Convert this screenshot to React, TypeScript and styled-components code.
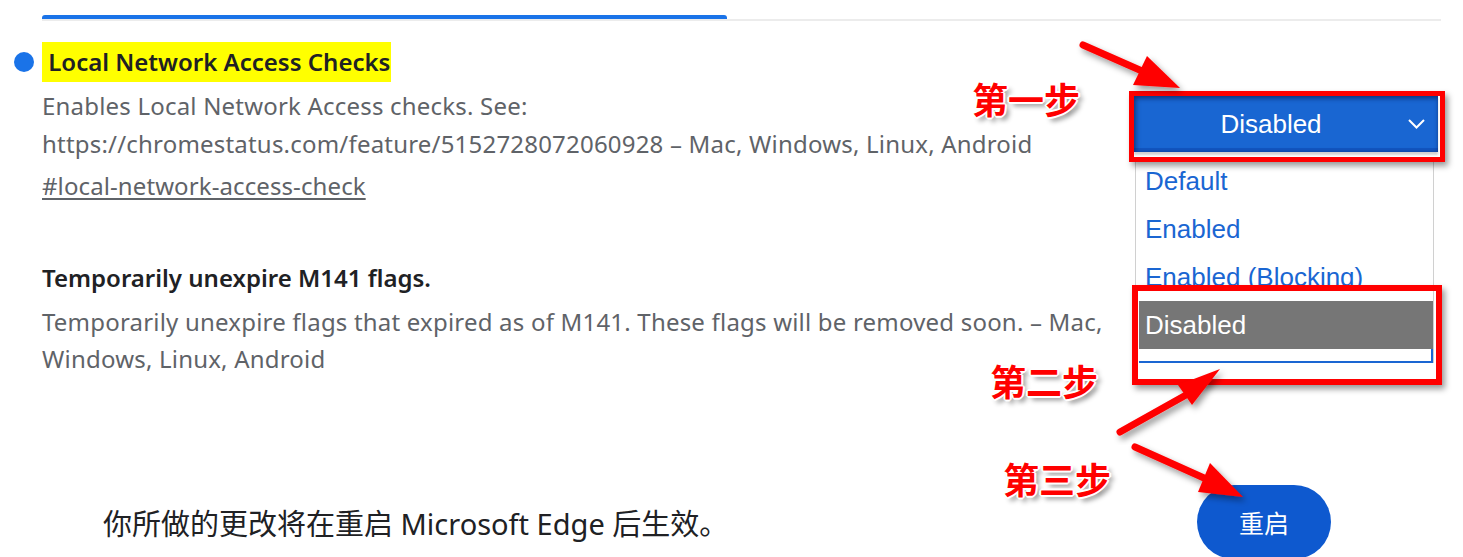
import styled, { createGlobalStyle } from "styled-components";

const GlobalStyle = createGlobalStyle`
  html, body {
    margin: 0;
    padding: 0;
    background: #ffffff;
    overflow: hidden;
  }
  body {
    font-family: "Noto Sans", "Noto Sans CJK SC", sans-serif;
  }
`;

interface IArrow {
    from: [number, number];
    to: [number, number];
    head: [number, number][];
}

const arrows: IArrow[] = [
    { from: [1083, 45], to: [1142, 71], head: [[1180, 88], [1147, 56], [1133, 85]] },
    { from: [1120, 432], to: [1186, 395], head: [[1220, 369], [1178, 385], [1192, 405]] },
    { from: [1135, 447], to: [1204, 478], head: [[1243, 497], [1210, 463], [1198, 492]] },
];

const options = ["Default", "Enabled", "Enabled (Blocking)", "Disabled"];

function App() {
    return (
        <Page>
            <GlobalStyle />
            <TabStrip>
                <ActiveTab />
            </TabStrip>

            <Experiment first>
                <Dot />
                <Info>
                    <Title highlighted> Local Network Access Checks</Title>
                    <Desc>
                        Enables Local Network Access checks. See:
                        https://chromestatus.com/feature/5152728072060928 – Mac, Windows, Linux, Android
                    </Desc>
                    <Permalink>#local-network-access-check</Permalink>
                </Info>
                <Control>
                    <Select>
                        <span>Disabled</span>
                        <svg width="17" height="10" viewBox="0 0 17 10">
                            <polyline points="1,1 8.5,8.5 16,1" fill="none" stroke="#ffffff" strokeWidth="2" />
                        </svg>
                    </Select>
                    <OptionList>
                        {options.map(opt => (
                            <Option key={opt} selected={opt === "Disabled"}>{opt}</Option>
                        ))}
                        <ListEnd />
                    </OptionList>
                </Control>
            </Experiment>

            <Experiment>
                <span />
                <Info>
                    <Title>Temporarily unexpire M141 flags.</Title>
                    <Desc tight>
                        Temporarily unexpire flags that expired as of M141. These flags will be removed soon. – Mac, Windows, Linux, Android
                    </Desc>
                </Info>
            </Experiment>

            <Footer>
                <Message>你所做的更改将在重启 Microsoft Edge 后生效。</Message>
                <RestartButton>重启</RestartButton>
            </Footer>

            {/* annotations pasted over the screenshot */}
            <Frame style={{ left: 1129, top: 91, width: 316, height: 71 }} thick={5} />
            <Frame style={{ left: 1132, top: 285, width: 310, height: 100 }} thick={6} />
            <StepLabel style={{ left: 972, top: 80 }}>第一步</StepLabel>
            <StepLabel style={{ left: 990, top: 362 }}>第二步</StepLabel>
            <StepLabel style={{ left: 1003, top: 460 }}>第三步</StepLabel>
            <ArrowLayer width="1463" height="557" viewBox="0 0 1463 557">
                <defs>
                    <filter id="arrowShadow" x="-20%" y="-20%" width="140%" height="140%">
                        <feDropShadow dx="3" dy="4" stdDeviation="3" floodColor="#000" floodOpacity="0.4" />
                    </filter>
                </defs>
                {arrows.map((a, i) => (
                    <g key={i} filter="url(#arrowShadow)">
                        <line x1={a.from[0]} y1={a.from[1]} x2={a.to[0]} y2={a.to[1]}
                            stroke="#ff0000" strokeWidth="7" strokeLinecap="round" />
                        <polygon points={a.head.map(p => p.join(",")).join(" ")} fill="#ff0000" />
                    </g>
                ))}
            </ArrowLayer>
        </Page>
    );
}

const Page = styled.div`
    position: relative;
    width: 1463px;
    padding-top: 15px;
`;

const TabStrip = styled.div`
    display: flex;
    align-items: flex-end;
    margin: 0 22px 0 42px;
    border-bottom: 2px solid #ececec;
`;

const ActiveTab = styled.div`
    width: 685px;
    height: 4px;
    background: #1a73e8;
    border-radius: 3px 3px 0 0;
`;

const Experiment = styled.section<{ first?: boolean }>`
    display: grid;
    grid-template-columns: 42px 1fr 304px;
    padding-right: 25px;
    align-items: start;
    margin-top: ${props => props.first ? "21px" : "54px"};
`;

const Dot = styled.span`
    width: 20px;
    height: 20px;
    margin: 10px 0 0 14px;
    border-radius: 50%;
    background: #1a73e8;
`;

const Info = styled.div`
    display: flex;
    flex-direction: column;
    align-items: flex-start;
    padding-right: 24px;
`;

const Title = styled.h3<{ highlighted?: boolean }>`
    margin: 0;
    font-size: 24px;
    font-weight: 600;
    line-height: ${props => props.highlighted ? "40px" : "38px"};
    color: #202124;
    white-space: pre;
    padding-right: ${props => props.highlighted ? "1px" : "0"};
    background: ${props => props.highlighted ? "#ffff00" : "transparent"};
`;

const Desc = styled.p<{ tight?: boolean }>`
    margin: ${props => props.tight ? "6px" : "5px"} 0 0;
    font-size: 24px;
    letter-spacing: 0.2px;
    line-height: ${props => props.tight ? "37px" : "38px"};
    color: #5f6368;
`;

const Permalink = styled.a`
    margin-top: 4px;
    font-size: 24px;
    letter-spacing: 0.1px;
    line-height: 38px;
    color: #5f6368;
    text-decoration: underline;
    text-underline-offset: 3px;
`;

const Control = styled.div`
    position: relative;
    margin-top: 54px;
`;

const Select = styled.div`
    display: grid;
    grid-template-columns: 1fr auto;
    align-items: center;
    height: 56px;
    padding-right: 13px;
    background: #1966d2;
    box-shadow: inset 0 3px 4px rgba(0, 20, 70, 0.45), inset 3px 0 4px rgba(0, 20, 70, 0.3),
        inset 0 -4px 0 #1256c0, 0 3px 2px rgba(0, 0, 0, 0.18);
    color: #ffffff;
    font-family: "Liberation Sans", Arial, sans-serif;
    font-size: 26px;

    span {
        text-align: center;
    }

    svg {
        display: block;
    }
`;

const OptionList = styled.div`
    position: absolute;
    top: 61px;
    left: 1px;
    width: 297px;
    background: #ffffff;
    border-left: 1px solid #d0d0d0;
    border-right: 1px solid #d0d0d0;
`;

const Option = styled.div<{ selected?: boolean }>`
    height: 48px;
    display: flex;
    align-items: center;
    margin-left: ${props => props.selected ? "3px" : "0"};
    padding-left: ${props => props.selected ? "6px" : "9px"};
    font-family: "Liberation Sans", Arial, sans-serif;
    font-size: 26px;
    color: ${props => props.selected ? "#ffffff" : "#1a66d2"};
    background: ${props => props.selected ? "#767676" : "transparent"};
`;

const ListEnd = styled.div`
    height: 12px;
    margin-left: 3px;
    border-bottom: 2px solid #1a66d2;
    border-right: 2px solid #1a66d2;
`;

const Footer = styled.footer`
    display: flex;
    align-items: center;
    justify-content: space-between;
    margin-top: 108px;
    padding: 0 132px 0 103px;
`;

const Message = styled.p`
    margin: 0;
    font-family: "Noto Sans", "Noto Sans CJK SC", sans-serif;
    font-size: 29px;
    color: #202124;
`;

const RestartButton = styled.button`
    width: 134px;
    height: 74px;
    border: none;
    border-radius: 37px;
    background: #0e59cf;
    color: #ffffff;
    font-family: "Noto Sans CJK SC", sans-serif;
    font-size: 25px;
    cursor: pointer;
`;

const Frame = styled.div<{ thick: number }>`
    position: absolute;
    box-sizing: border-box;
    border: ${props => props.thick}px solid #ff0000;
    box-shadow: 3px 4px 6px rgba(0, 0, 0, 0.4);
    pointer-events: none;
`;

const StepLabel = styled.span`
    position: absolute;
    font-family: "Noto Sans CJK SC", sans-serif;
    font-weight: 700;
    font-size: 36px;
    line-height: 36px;
    color: #ff0000;
    text-shadow: 1px 1px 0 #fff, -1px -1px 0 #fff, 1px -1px 0 #fff, -1px 1px 0 #fff,
        2px 0 0 #fff, -2px 0 0 #fff, 0 2px 0 #fff, 0 -2px 0 #fff, 4px 4px 5px rgba(0, 0, 0, 0.45);
    pointer-events: none;
`;

const ArrowLayer = styled.svg`
    position: absolute;
    top: 0;
    left: 0;
    pointer-events: none;
`;

export default App;
